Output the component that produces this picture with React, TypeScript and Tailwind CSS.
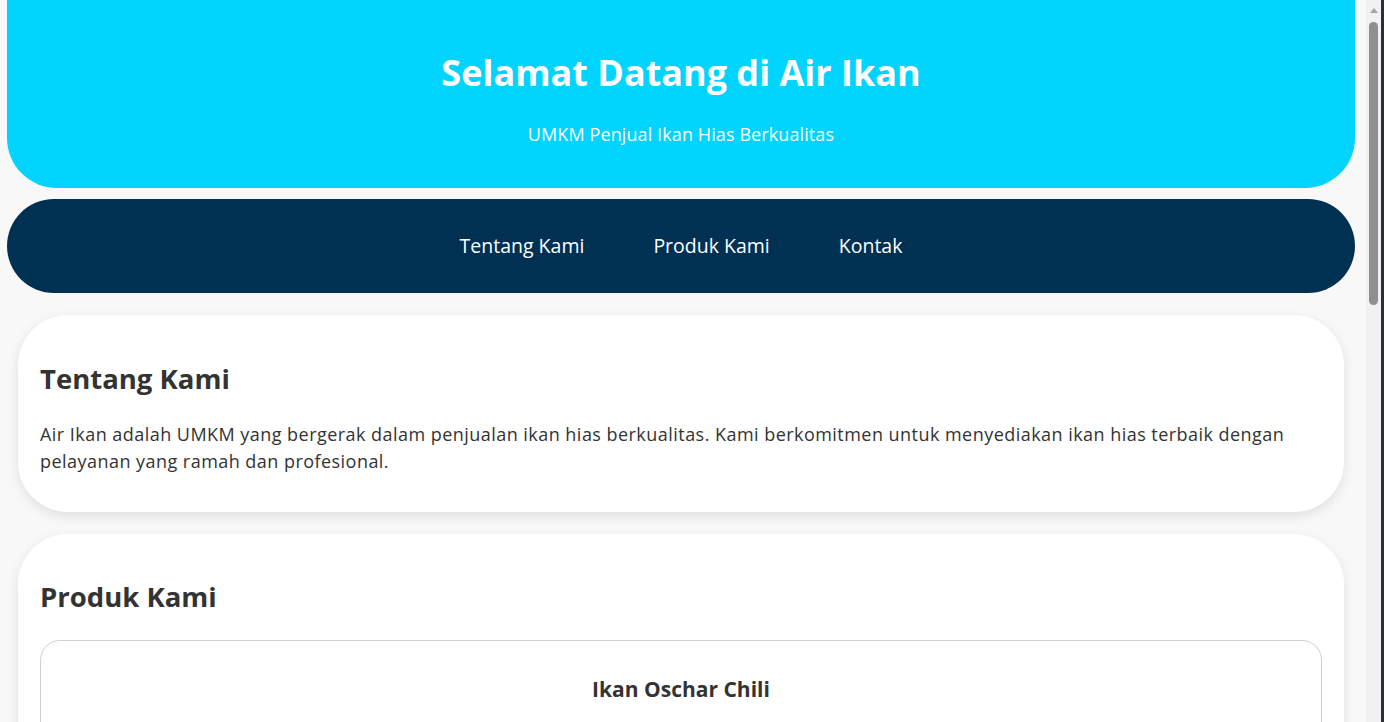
const products = [
  { name: 'Ikan Oschar Chili' },
  { name: 'Ikan Cupang Halfmoon' },
]

function Scrollbar() {
  return (
    <div className="w-[15px] bg-[#f1f1f1] flex flex-col items-center">
      <div className="mt-[8px] w-0 h-0 border-l-[4px] border-r-[4px] border-b-[5px] border-l-transparent border-r-transparent border-b-[#a3a3a3]" />
      <div className="mt-[9px] w-[9px] h-[283px] rounded-full bg-[#8f8f8f]" />
    </div>
  )
}

export default function App() {
  return (
    <div className="flex w-[1384px] h-[722px] overflow-hidden font-['Open_Sans',sans-serif] text-[#333]">
      <main className="w-[1366px] h-[722px] overflow-hidden bg-[#f8f8f8] pl-[7px] pr-[11px]">
        <header className="h-[188px] rounded-b-[50px] bg-[#00d4ff] text-white flex flex-col items-center">
          <h1 className="mt-[50px] text-[36px] leading-[46px] font-bold">Selamat Datang di Air Ikan</h1>
          <p className="mt-[25px] text-[18px] leading-[26px] tracking-[0.1px]">UMKM Penjual Ikan Hias Berkualitas</p>
        </header>

        <nav className="mt-[11px] h-[94px] rounded-full bg-[#003153] flex items-center justify-center gap-[69px]">
          <a href="#tentang" className="text-white text-[19.5px] font-medium">Tentang Kami</a>
          <a href="#produk" className="text-white text-[19.5px] font-medium">Produk Kami</a>
          <a href="#kontak" className="text-white text-[19.5px] font-medium">Kontak</a>
        </nav>

        <section id="tentang" className="mx-[11px] mt-[22px] bg-white rounded-[50px] shadow-[0_4px_12px_rgba(0,0,0,0.1)] px-[22px] pt-[44px] pb-[38px]">
          <h2 className="text-[27.5px] leading-[40px] font-bold">Tentang Kami</h2>
          <p className="mt-[22px] text-[18px] leading-[26.5px] tracking-[0.46px]">
            Air Ikan adalah UMKM yang bergerak dalam penjualan ikan hias berkualitas. Kami berkomitmen untuk menyediakan ikan hias terbaik dengan pelayanan yang ramah dan profesional.
          </p>
        </section>

        <section id="produk" className="mx-[11px] mt-[22px] bg-white rounded-[50px] shadow-[0_4px_12px_rgba(0,0,0,0.1)] px-[22px] pt-[43px] pb-[38px]">
          <h2 className="text-[27.5px] leading-[40px] font-bold">Produk Kami</h2>
          <div className="mt-[23px] flex flex-col gap-[20px]">
            {products.map((p) => (
              <div key={p.name} className="border border-[#d0d0d0] rounded-[20px] pt-[33px] pb-[30px] px-[20px] flex flex-col items-center">
                <h3 className="text-[21px] leading-[30px] font-bold">{p.name}</h3>
                <div className="mt-[30px] w-[300px] h-[200px] rounded-[12px] bg-[#e6f9ff]" />
              </div>
            ))}
          </div>
        </section>
      </main>
      <Scrollbar />
      <div className="w-[3px] bg-[#2a2e35]" />
    </div>
  )
}
